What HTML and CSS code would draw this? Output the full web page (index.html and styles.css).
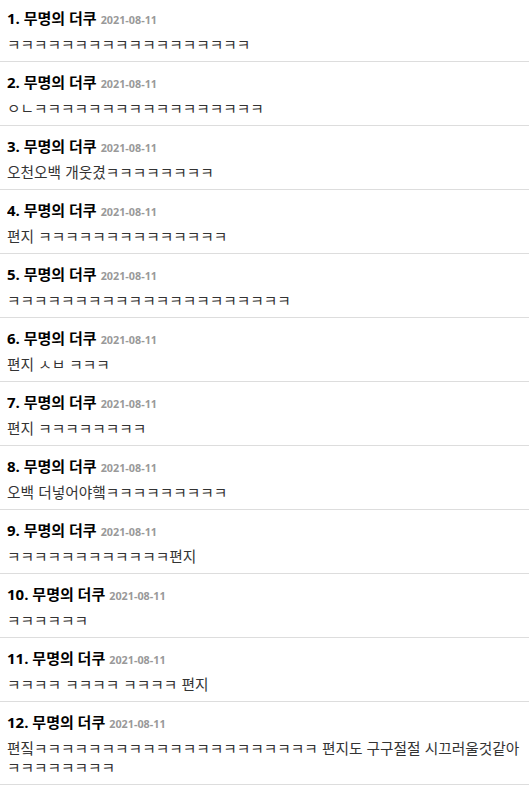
FILE: index.html
```html
<!DOCTYPE html>
<html lang="ko">
<head>
<meta charset="utf-8">
<link rel="stylesheet" href="styles.css">
</head>
<body>
<ul class="list">
  <li class="item"><div class="head"><span class="name">1. 무명의 더쿠</span><span class="date">2021-08-11</span></div><div class="text">ㅋㅋㅋㅋㅋㅋㅋㅋㅋㅋㅋㅋㅋㅋㅋㅋㅋㅋ</div></li>
  <li class="item"><div class="head"><span class="name">2. 무명의 더쿠</span><span class="date">2021-08-11</span></div><div class="text">ㅇㄴㅋㅋㅋㅋㅋㅋㅋㅋㅋㅋㅋㅋㅋㅋㅋㅋㅋ</div></li>
  <li class="item"><div class="head"><span class="name">3. 무명의 더쿠</span><span class="date">2021-08-11</span></div><div class="text">오천오백 개웃겼ㅋㅋㅋㅋㅋㅋㅋㅋ</div></li>
  <li class="item"><div class="head"><span class="name">4. 무명의 더쿠</span><span class="date">2021-08-11</span></div><div class="text">편지 ㅋㅋㅋㅋㅋㅋㅋㅋㅋㅋㅋㅋㅋㅋ</div></li>
  <li class="item"><div class="head"><span class="name">5. 무명의 더쿠</span><span class="date">2021-08-11</span></div><div class="text">ㅋㅋㅋㅋㅋㅋㅋㅋㅋㅋㅋㅋㅋㅋㅋㅋㅋㅋㅋㅋㅋ</div></li>
  <li class="item"><div class="head"><span class="name">6. 무명의 더쿠</span><span class="date">2021-08-11</span></div><div class="text">편지 ㅅㅂ ㅋㅋㅋ</div></li>
  <li class="item"><div class="head"><span class="name">7. 무명의 더쿠</span><span class="date">2021-08-11</span></div><div class="text">편지 ㅋㅋㅋㅋㅋㅋㅋㅋ</div></li>
  <li class="item"><div class="head"><span class="name">8. 무명의 더쿠</span><span class="date">2021-08-11</span></div><div class="text">오백 더넣어야햌ㅋㅋㅋㅋㅋㅋㅋㅋㅋ</div></li>
  <li class="item"><div class="head"><span class="name">9. 무명의 더쿠</span><span class="date">2021-08-11</span></div><div class="text">ㅋㅋㅋㅋㅋㅋㅋㅋㅋㅋㅋㅋ편지</div></li>
  <li class="item"><div class="head"><span class="name">10. 무명의 더쿠</span><span class="date">2021-08-11</span></div><div class="text">ㅋㅋㅋㅋㅋㅋ</div></li>
  <li class="item"><div class="head"><span class="name">11. 무명의 더쿠</span><span class="date">2021-08-11</span></div><div class="text">ㅋㅋㅋㅋ ㅋㅋㅋㅋ ㅋㅋㅋㅋ 편지</div></li>
  <li class="item"><div class="head"><span class="name">12. 무명의 더쿠</span><span class="date">2021-08-11</span></div><div class="text">편짘ㅋㅋㅋㅋㅋㅋㅋㅋㅋㅋㅋㅋㅋㅋㅋㅋㅋㅋㅋㅋㅋ 편지도 구구절절 시끄러울것같아ㅋㅋㅋㅋㅋㅋㅋㅋ</div></li>
</ul>
</body>
</html>
```
FILE: styles.css
```css
html, body {
  margin: 0;
  padding: 0;
  background: #fff;
}
body {
  font-family: "Open Sans", "Noto Sans CJK KR", sans-serif;
  color: #333;
}
.list {
  list-style: none;
  margin: 0;
  padding: 0;
}
.item {
  padding: 10px 4px 8px 7px;
  border-bottom: 1px solid #ddd;
}
.item:first-child {
  padding-top: 8px;
}
.head {
  display: flex;
  align-items: baseline;
  gap: 4px;
  height: 20px;
  line-height: 20px;
  overflow: hidden;
}
.name {
  font-size: 15px;
  font-weight: 700;
  color: #000;
}
.date {
  font-size: 10.8px;
  font-weight: 700;
  color: #999;
}
.text {
  margin-top: 6px;
  font-family: "Noto Sans CJK KR", sans-serif;
  font-size: 14.7px;
  line-height: 19px;
  color: #333;
  word-break: break-all;
}
```
